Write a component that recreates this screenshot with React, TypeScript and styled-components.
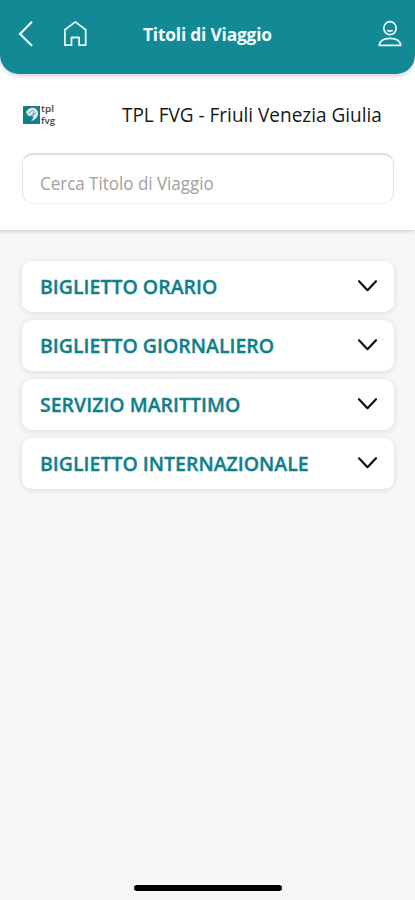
import React from "react";
import styled, { createGlobalStyle } from "styled-components";

const GlobalStyle = createGlobalStyle`
  * { box-sizing: border-box; }
  body { margin: 0; background: #f7f7f7; font-family: "Open Sans", "Noto Sans", sans-serif; }
`;

const Screen = styled.div`
  display: flex;
  flex-direction: column;
  width: 415px;
  height: 900px;
  background: #f7f7f7;
  overflow: hidden;
`;

const TopPanel = styled.section`
  flex: none;
  height: 230px;
  background: #fff;
  box-shadow: 0 1px 4px rgba(0, 0, 0, 0.2);
`;

const Header = styled.header`
  display: grid;
  grid-template-columns: 37px 106px 1fr 26px;
  align-items: start;
  height: 74px;
  padding: 19px 12px 0 16px;
  background: #138996;
  border-radius: 0 0 19px 19px;
  box-shadow: 0 2px 5px rgba(0, 0, 0, 0.18);
`;

const IconButton = styled.button`
  display: flex;
  padding: 0;
  border: 0;
  background: none;
  color: #e6fcff;
`;

const Title = styled.h1`
  margin: 4px 0 0 -16px;
  font-size: 17.3px;
  line-height: 24px;
  font-weight: 700;
  letter-spacing: -0.17px;
  color: #f4ffff;
  white-space: nowrap;
`;

const Provider = styled.div`
  display: flex;
  justify-content: space-between;
  align-items: center;
  height: 30px;
  margin: 26px 33px 0 22px;
`;

const ProviderName = styled.span`
  font-size: 20px;
  line-height: 28px;
  color: #181818;
  white-space: nowrap;
  transform: scaleX(0.949);
  transform-origin: right center;
`;

const SearchBox = styled.label`
  display: block;
  width: 372px;
  height: 51px;
  margin: 23px 0 0 22px;
  padding: 7px 17px 0;
  border: 1px solid #e6e6e6;
  border-top: 2px solid #dedede;
  border-bottom-color: #f3f3f3;
  border-radius: 11px;
  background: #fff;
`;

const SearchInput = styled.input`
  display: block;
  width: 100%;
  height: 41px;
  padding: 0;
  border: 0;
  background: none;
  font: 400 18.3px "Open Sans", sans-serif;
  outline: none;
  transform: scaleX(0.928);
  transform-origin: left center;
  &::placeholder { color: #a0a0a0; opacity: 1; }
`;

const TicketList = styled.main`
  display: flex;
  flex-direction: column;
  gap: 8px;
  padding: 31px 21px 0 22px;
`;

const TicketRow = styled.button`
  display: flex;
  align-items: center;
  justify-content: space-between;
  height: 51px;
  padding: 0 16px 0 18px;
  border: 0;
  border-radius: 10px;
  background: #fff;
  box-shadow: 0 1px 6px rgba(0, 0, 0, 0.12);
  font-family: "Open Sans", sans-serif;
`;

const TicketName = styled.span`
  padding-top: 1px;
  font-size: 20px;
  line-height: 26px;
  font-weight: 600;
  -webkit-text-stroke: 0.35px #107f8c;
  color: #107f8c;
  white-space: nowrap;
  transform: scaleX(0.975);
  transform-origin: left center;
`;

const HomeIndicator = styled.div`
  width: 148px;
  height: 6px;
  margin: auto auto 9px 134px;
  border-radius: 3px;
  background: #000;
`;

const BackIcon = () => (
  <svg width="20" height="30" viewBox="0 0 20 30" fill="none" stroke="currentColor" strokeWidth="2.2" strokeLinecap="round">
    <path d="M15.5 3.3 4 15l11.5 11.2" />
  </svg>
);

const HomeIcon = () => (
  <svg width="36" height="30" viewBox="0 0 36 30" fill="none" stroke="currentColor" strokeWidth="1.8" strokeLinejoin="round">
    <path d="M11.9 10.8 22.3 2.9l10.4 7.9V26.2h-6.6v-7.7h-7.6v7.7h-6.6Z" />
  </svg>
);

const UserIcon = () => (
  <svg width="26" height="30" viewBox="0 0 26 30" fill="none" stroke="currentColor" strokeWidth="1.7" strokeLinejoin="round">
    <ellipse cx="13" cy="9.2" rx="6.2" ry="6.5" />
    <path d="M10.2 11.2q2.8 1.5 5.6 0M2.2 26.3q1-7 10.8-7t10.8 7Z" />
  </svg>
);

const Chevron = () => (
  <svg width="22" height="18" viewBox="0 0 22 18" fill="none" stroke="#111" strokeWidth="2.2" strokeLinecap="round" strokeLinejoin="round">
    <path d="m3 3.2 8.5 9 8.5-9" />
  </svg>
);

const Logo = () => (
  <svg width="36" height="24" viewBox="0 0 36 24">
    <path d="M1 3h17v18H1Z" fill="#147f8a" />
    <path d="M4 9c2-4 8-6 11-2 3 5-1 10-6 11 2-2 3-4 1-5-2 1-5 0-6-4Z" fill="#d9edf0" />
    <path d="m6 11 5-4M8 13l6-3M11 14l1-6" stroke="#438f99" strokeWidth=".8" />
    <g fill="#414141" fontFamily="Open Sans, sans-serif" fontSize="8.5" fontWeight="600">
      <text x="19" y="9" textLength="13" lengthAdjust="spacingAndGlyphs">tpl</text>
      <text x="19" y="20.7" textLength="14" lengthAdjust="spacingAndGlyphs">fvg</text>
    </g>
  </svg>
);

const tickets = [
  "BIGLIETTO ORARIO",
  "BIGLIETTO GIORNALIERO",
  "SERVIZIO MARITTIMO",
  "BIGLIETTO INTERNAZIONALE",
];

export default function App() {
  return (
    <Screen>
      <GlobalStyle />
      <TopPanel>
        <Header>
          <IconButton aria-label="Indietro"><BackIcon /></IconButton>
          <IconButton aria-label="Home"><HomeIcon /></IconButton>
          <Title>Titoli di Viaggio</Title>
          <IconButton aria-label="Profilo"><UserIcon /></IconButton>
        </Header>
        <Provider>
          <Logo />
          <ProviderName>TPL FVG - Friuli Venezia Giulia</ProviderName>
        </Provider>
        <SearchBox>
          <SearchInput placeholder="Cerca Titolo di Viaggio" />
        </SearchBox>
      </TopPanel>
      <TicketList>
        {tickets.map((name) => (
          <TicketRow key={name}>
            <TicketName>{name}</TicketName>
            <Chevron />
          </TicketRow>
        ))}
      </TicketList>
      <HomeIndicator />
    </Screen>
  );
}
